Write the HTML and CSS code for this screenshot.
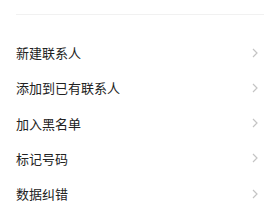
FILE: index.html
```html
<!DOCTYPE html>
<html lang="zh">
<head>
<meta charset="utf-8">
<link rel="stylesheet" href="styles.css">
</head>
<body>
<div class="page">
  <div class="divider"></div>
  <ul class="menu">
    <li class="item"><span class="label">新建联系人</span><svg class="chev" viewBox="0 0 6 10"><path d="M1 1 L5 5 L1 9"/></svg></li>
    <li class="item"><span class="label">添加到已有联系人</span><svg class="chev" viewBox="0 0 6 10"><path d="M1 1 L5 5 L1 9"/></svg></li>
    <li class="item"><span class="label">加入黑名单</span><svg class="chev" viewBox="0 0 6 10"><path d="M1 1 L5 5 L1 9"/></svg></li>
    <li class="item"><span class="label">标记号码</span><svg class="chev" viewBox="0 0 6 10"><path d="M1 1 L5 5 L1 9"/></svg></li>
    <li class="item"><span class="label">数据纠错</span><svg class="chev" viewBox="0 0 6 10"><path d="M1 1 L5 5 L1 9"/></svg></li>
  </ul>
</div>
</body>
</html>
```
FILE: styles.css
```css
html, body {
  margin: 0;
  padding: 0;
  background: #ffffff;
}
.page {
  width: 280px;
  height: 210px;
  overflow: hidden;
  padding: 14px 16px 0 16px;
  box-sizing: border-box;
  font-family: "Noto Sans CJK SC", "Noto Sans", sans-serif;
}
.divider {
  height: 1px;
  background: #f1f1f1;
  margin-right: 0;
}
.menu {
  list-style: none;
  margin: 20px 0 0 0;
  padding: 0;
}
.item {
  height: 35.25px;
  display: flex;
  align-items: center;
  justify-content: space-between;
}
.label {
  font-size: 13px;
  color: #222222;
  line-height: 1;
}
.chev {
  width: 6px;
  height: 10px;
  margin-right: 6px;
  fill: none;
  stroke: #c4c4c4;
  stroke-width: 1.2;
}
```
